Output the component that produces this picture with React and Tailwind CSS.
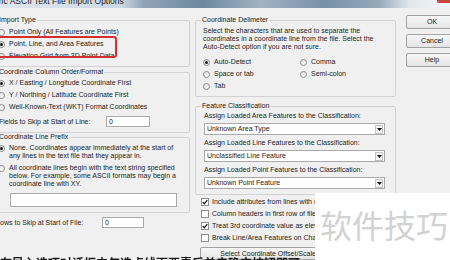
import React from 'react';

const Radio = ({ checked }) => (
  <span className="flex h-[7px] w-[7px] shrink-0 items-center justify-center rounded-full border border-[#8a8a8a] bg-[linear-gradient(135deg,#e2e2e2,#ffffff)]">
    {checked && <span className="h-[3px] w-[3px] rounded-full bg-[#1b1b1b]" />}
  </span>
);

const Check = ({ checked }) => (
  <span className="flex h-[8px] w-[8px] shrink-0 items-center justify-center border border-[#8e8f8f] bg-white">
    {checked && (
      <svg width="6" height="6" viewBox="0 0 6 6">
        <path d="M0.8 3.1 L2.3 4.7 L5.3 1.1" fill="none" stroke="#1b1b1b" strokeWidth="1.3" />
      </svg>
    )}
  </span>
);

const Combo = ({ value }) => (
  <div className="flex h-[12px] w-[181px] items-center border border-[#a9a9a9] bg-white pl-[2px]">
    <span className="flex-1">{value}</span>
    <span className="mr-[1px] flex h-[9px] w-[8px] items-center justify-center border border-[#c4c4c4] bg-[#f3f3f3]">
      <svg width="5" height="3" viewBox="0 0 5 3">
        <path d="M0 0h5L2.5 3z" fill="#111" />
      </svg>
    </span>
  </div>
);

const TextBox = ({ value, className }) => (
  <div className={`flex items-center border border-[#a9a9a9] bg-white pl-[2px] ${className}`}>{value}</div>
);

const Group = ({ title, className, children }) => (
  <fieldset className={`rounded-[2px] border border-[#d3d3d3] pl-[5px] ${className}`}>
    <legend className="px-[1px] leading-[8px]">{title}</legend>
    {children}
  </fieldset>
);

const RadioRow = ({ checked, label, className = '' }) => (
  <div className={`flex h-[12px] items-center gap-[4px] ${className}`}>
    <Radio checked={checked} />
    <span>{label}</span>
  </div>
);

const CheckRow = ({ checked, label }) => (
  <div className="flex h-[12px] items-center gap-[3px]">
    <Check checked={checked} />
    <span>{label}</span>
  </div>
);

const Button = ({ children, className = '' }) => (
  <div className={`flex items-center justify-center rounded-[2px] border border-[#a2a2a2] bg-[linear-gradient(#f7f7f7,#e4e4e4)] ${className}`}>
    {children}
  </div>
);

export default function App() {
  return (
    <div className="relative h-[260px] w-[450px] overflow-hidden whitespace-nowrap bg-[#f0f0f0] font-['Liberation_Sans',Arial,sans-serif] text-[7px] leading-[8px] text-[#222]">
      {/* title bar */}
      <div className="flex h-[8px] overflow-hidden bg-[linear-gradient(90deg,#dfe7ef_0%,#ccd8e3_27%,#8fa4b7_32%,#6e889f_45%,#a1b3c4_58%,#7890a7_72%,#94a9bb_84%,#dfe7ee_91%,#eef2f6_97%)]">
        <span className="-ml-[22px] -mt-[4px] text-[8.5px] leading-[10px] text-[#1c1c1c]">Generic ASCII Text File Import Options</span>
        <span className="ml-auto h-[3px] w-[13px] rounded-bl-[2px] bg-[#c8473c]" />
      </div>

      <div className="flex">
        {/* left column */}
        <div className="-ml-[8px] w-[198px] shrink-0">
          <Group title="Import Type" className="mt-[8px] h-[51px]">
            <div className="pt-[2px]">
              <RadioRow label="Point Only (All Features are Points)" />
              <RadioRow checked label="Point, Line, and Area Features" />
              <RadioRow label="Elevation Grid from 3D Point Data" />
            </div>
          </Group>

          <Group title="Coordinate Column Order/Format" className="mt-[1px] pb-[5px]">
            <div className="pt-[1px]">
              <RadioRow checked label="X / Easting / Longitude Coordinate First" />
              <RadioRow label="Y / Northing / Latitude Coordinate First" />
              <RadioRow label="Well-Known-Text (WKT) Format Coordinates" />
              <div className="mt-[3px] flex h-[11px] items-center">
                <span className="w-[108px] pl-[1px]">Fields to Skip at Start of Line:</span>
                <TextBox value="0" className="h-[11px] w-[44px]" />
              </div>
            </div>
          </Group>

          <Group title="Coordinate Line Prefix" className="pb-[5px]">
            <div className="pt-[3px]">
              <div className="flex items-start gap-[4px]">
                <span className="mt-[0.5px]"><Radio checked /></span>
                <span>
                  None. Coordinates appear immediately at the start of
                  <br />
                  any lines in the text file that they appear in.
                </span>
              </div>
              <div className="mt-[4px] flex items-start gap-[4px]">
                <span className="mt-[0.5px]"><Radio /></span>
                <span>
                  All coordinate lines begin with the text string specified
                  <br />
                  below. For example, some ASCII formats may begin a
                  <br />
                  coordinate line with XY.
                </span>
              </div>
              <TextBox value="" className="ml-[12px] mt-[5px] h-[14px] w-[167px]" />
            </div>
          </Group>

          <div className="mt-[4px] flex h-[11px] items-center pl-[3px]">
            <span className="w-[107px]">Rows to Skip at Start of File:</span>
            <TextBox value="0" className="h-[11px] w-[42px]" />
          </div>
        </div>

        {/* middle column */}
        <div className="ml-[5px] w-[201px] shrink-0">
          <Group title="Coordinate Delimeter" className="mt-[8px] pb-[4px]">
            <div className="pl-[2px] pt-[3px]">
              <div>
                Select the characters that are used to separate the
                <br />
                coordinates in a coordinate line from the file. Select the
                <br />
                Auto-Detect option if you are not sure.
              </div>
              <div className="mt-[5px] grid grid-cols-[97px_auto]">
                <RadioRow checked label="Auto-Detect" className="h-[11px]" />
                <RadioRow label="Comma" className="h-[11px]" />
                <RadioRow label="Space or tab" className="h-[11px]" />
                <RadioRow label="Semi-colon" className="h-[11px]" />
                <RadioRow label="Tab" className="h-[11px]" />
              </div>
            </div>
          </Group>

          <Group title="Feature Classification" className="mt-[5px] pb-[5px]">
            <div className="pl-[3px] pt-[2px]">
              <div>Assign Loaded Area Features to the Classification:</div>
              <div className="mt-[3px]"><Combo value="Unknown Area Type" /></div>
              <div className="mt-[4px]">Assign Loaded Line Features to the Classification:</div>
              <div className="mt-[3px]"><Combo value="Unclassified Line Feature" /></div>
              <div className="mt-[4px]">Assign Loaded Point Features to the Classification:</div>
              <div className="mt-[3px]"><Combo value="Unknown Point Feature" /></div>
            </div>
          </Group>

          <div className="mt-[1px] pl-[6px]">
            <CheckRow checked label="Include attributes from lines with non-coordinate data" />
            <CheckRow label="Column headers in first row of file" />
            <CheckRow checked label="Treat 3rd coordinate value as elevation" />
            <CheckRow label="Break Line/Area Features on Change in Attributes" />
          </div>

          <Button className="ml-[5px] mt-[3px] h-[13px] w-[142px]">Select Coordinate Offset/Scale...</Button>
        </div>

        {/* right column */}
        <div className="ml-[10px] flex shrink-0 flex-col gap-[5px] pt-[7px]">
          <Button className="h-[14px] w-[52px]">OK</Button>
          <Button className="h-[14px] w-[52px]">Cancel</Button>
          <Button className="h-[14px] w-[52px]">Help</Button>
        </div>
      </div>

      {/* red highlight annotation */}
      <div className="absolute left-[-4px] top-[36px] h-[22px] w-[121px] rounded-[3px] border-2 border-[#d42f2f]" />

      {/* caption strip clipped at bottom */}
      <div className="absolute left-0 top-[256px] w-[316px] overflow-hidden font-['Noto_Sans_CJK_SC',sans-serif] text-[12px] font-bold leading-[14px] text-[#1a1a1a] blur-[0.4px]">
        在导入选项对话框中勾选点线面要素后单击确定按钮即可
      </div>

      {/* watermark panel */}
      <div className="absolute left-[315px] top-[193px] h-[67px] w-[135px] bg-white pl-[5px] pt-[15px]">
        <div className="font-['Noto_Sans_CJK_SC',sans-serif] text-[32px] leading-[32px] text-[#d2d2d2]">软件技巧</div>
      </div>
    </div>
  );
}
